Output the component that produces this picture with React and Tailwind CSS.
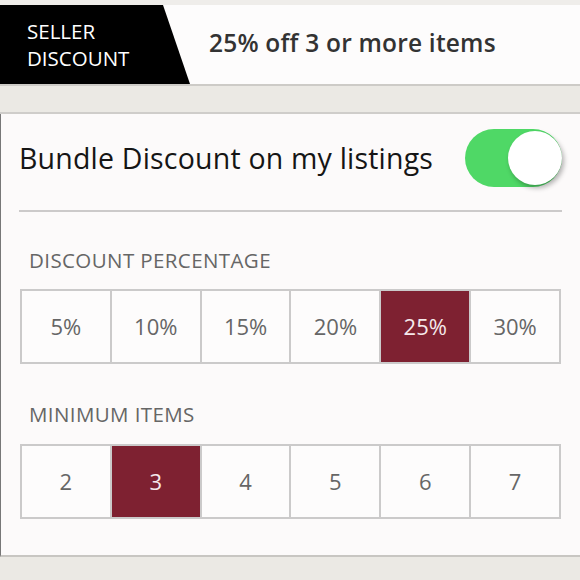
import { useState } from 'react';

const percents = ['5%', '10%', '15%', '20%', '25%', '30%'];
const items = ['2', '3', '4', '5', '6', '7'];

const Segments = ({ options, value, onChange }) => (
  <div className="mx-[19px] flex h-[75px] border-2 border-[#cbcaca] bg-[#fdfcfc]">
    {options.map((opt, i) => (
      <button
        key={opt}
        onClick={() => onChange(opt)}
        className={`flex flex-1 items-center justify-center text-[22px] ${i > 0 ? 'border-l-2 border-[#cbcaca]' : ''} ${
          value === opt ? 'bg-[#7e2131] text-[#f4e8ea]' : 'text-[#666]'
        }`}
      >
        {opt}
      </button>
    ))}
  </div>
);

export default function App() {
  const [enabled, setEnabled] = useState(true);
  const [percent, setPercent] = useState('25%');
  const [minItems, setMinItems] = useState('3');

  return (
    <div className="w-[580px] h-[580px] overflow-hidden bg-[#ebe9e4]" style={{ fontFamily: '"Open Sans", Lato, sans-serif' }}>
      <div className="h-[5px] bg-[#efedea]" />

      {/* Header */}
      <div className="flex h-[81px] items-stretch border-b-2 border-[#cdcbc7] bg-[#fdfcfc]">
        <div className="w-[190px] bg-black pl-[27px] pt-[13px] text-[20.5px] leading-[27px] text-white [clip-path:polygon(0_0,163px_0,190px_100%,0_100%)]">
          <div>SELLER</div>
          <div>DISCOUNT</div>
        </div>
        <div className="flex items-center pl-[19px] pb-[3px] text-[24.5px] tracking-[0.2px] font-semibold text-[#333]">
          25% off {minItems} or more items
        </div>
      </div>

      <div className="h-[28px] border-b-2 border-[#cfcdca]" />

      {/* Card */}
      <div className="h-[443px] border-l border-b-2 border-l-[#777] border-b-[#c8c6c2] bg-[#fcfafa]">
        <div className="mx-[18px] flex items-center justify-between border-b-2 border-[#cccaca] pt-[15px] pb-[23px]">
          <span className="text-[28.5px] tracking-[0.2px] text-[#151515]">Bundle Discount on my listings</span>
          <button
            onClick={() => setEnabled(!enabled)}
            className={`relative h-[58px] w-[97px] rounded-full ${enabled ? 'bg-[#4fd866]' : 'bg-[#e5e5e5]'}`}
          >
            <span
              className={`absolute top-[2px] h-[54px] w-[54px] rounded-full bg-white shadow-[2px_3px_5px_rgba(0,0,0,0.3)] ${
                enabled ? 'right-0' : 'left-[2px]'
              }`}
            />
          </button>
        </div>

        <div className="pl-[28px] pt-[36px] pb-[17px] text-[20.5px] tracking-[0.4px] leading-[24px] text-[#666]">DISCOUNT PERCENTAGE</div>
        <Segments options={percents} value={percent} onChange={setPercent} />

        <div className="pl-[28px] pt-[38px] pb-[18px] text-[20.5px] tracking-[0.4px] leading-[24px] text-[#666]">MINIMUM ITEMS</div>
        <Segments options={items} value={minItems} onChange={setMinItems} />
      </div>
    </div>
  );
}
